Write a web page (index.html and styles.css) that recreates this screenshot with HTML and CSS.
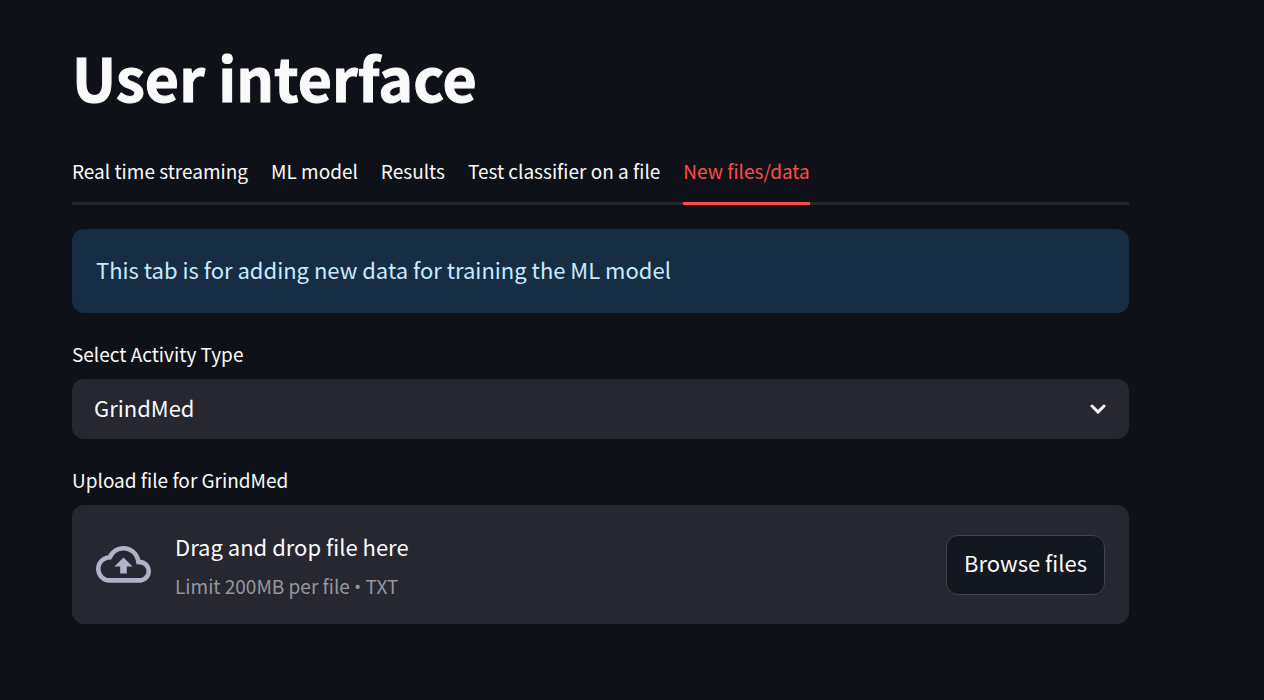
FILE: index.html
```html
<!DOCTYPE html>
<html lang="en">
<head>
<meta charset="utf-8">
<meta name="viewport" content="width=device-width, initial-scale=1">
<title>User interface</title>
<link rel="stylesheet" href="styles.css">
</head>
<body>
<main class="page">
  <h1 class="title">User interface</h1>
  <div class="tabs" role="tablist">
    <button class="tab" type="button" role="tab" aria-selected="false">Real time streaming</button>
    <button class="tab" type="button" role="tab" aria-selected="false">ML model</button>
    <button class="tab" type="button" role="tab" aria-selected="false">Results</button>
    <button class="tab" type="button" role="tab" aria-selected="false">Test classifier on a file</button>
    <button class="tab tab-active" type="button" role="tab" aria-selected="true">New files/data</button>
  </div>
  <p class="notice">This tab is for adding new data for training the ML model</p>
  <div class="field">
    <label class="label" for="activity">Select Activity Type</label>
    <div class="select-wrap">
      <select class="select" id="activity">
        <option>GrindMed</option>
      </select>
      <svg class="chevron" viewBox="0 0 16 10" aria-hidden="true"><path d="M2 2l6 6 6-6"/></svg>
    </div>
  </div>
  <div class="field">
    <label class="label" for="browse">Upload file for GrindMed</label>
    <div class="dropzone">
      <svg class="cloud" viewBox="0 0 24 16" aria-hidden="true"><path transform="translate(0 -4)" d="M19.35 10.04A7.49 7.49 0 0 0 12 4C9.11 4 6.6 5.64 5.35 8.04A5.994 5.994 0 0 0 0 14c0 3.31 2.69 6 6 6h13c2.76 0 5-2.24 5-5 0-2.64-2.05-4.78-4.65-4.96zM19 18H6c-2.21 0-4-1.79-4-4 0-2.05 1.53-3.76 3.56-3.97l1.07-.11.5-.95A5.469 5.469 0 0 1 12 6c2.62 0 4.88 1.86 5.39 4.43l.3 1.5 1.53.11A2.98 2.98 0 0 1 22 15c0 1.65-1.35 3-3 3zM8 13h2.55v3h2.9v-3H16l-4-4z"/></svg>
      <div class="drop-text">
        <span class="drop-main">Drag and drop file here</span>
        <span class="drop-hint">Limit 200MB per file <span class="bullet">•</span> TXT</span>
      </div>
      <button class="browse" id="browse" type="button">Browse files</button>
    </div>
  </div>
</main>
</body>
</html>
```
FILE: styles.css
```css
* {
  box-sizing: border-box;
}

body {
  margin: 0;
  background: #0e1117;
  color: #fafafa;
  font-family: "Noto Sans CJK SC", "Open Sans", sans-serif;
  font-size: 22px;
  line-height: 36px;
}

button,
select {
  font: inherit;
  color: inherit;
}

.page {
  padding: 37px 135px 40px 72px;
}

.title {
  margin: 0;
  font-size: 59px;
  font-weight: 700;
  line-height: 80px;
  -webkit-text-stroke: 1px #fafafa;
}

.tabs {
  display: flex;
  gap: 23px;
  margin: 28px 0 24px;
  box-shadow: inset 0 -3px #27282c;
}

.tab {
  padding: 8px 0 13px;
  border: 0;
  border-bottom: 3px solid transparent;
  background: none;
  font-size: 19px;
  white-space: nowrap;
}

.tab-active {
  border-color: #ff4b4b;
  color: #ff4b4b;
}

.notice {
  margin: 0;
  padding: 22px 24px 26px;
  border-radius: 12px;
  background: #172d43;
  color: #c7ebff;
}

.field {
  margin-top: 24px;
}

.label {
  display: block;
  padding-bottom: 8px;
  font-size: 19px;
  line-height: 34px;
}

.select-wrap {
  display: grid;
  align-items: center;
}

.select {
  grid-area: 1 / 1;
  width: 100%;
  height: 60px;
  padding: 0 60px 4px 22px;
  border: 0;
  border-radius: 12px;
  background: #262730;
  appearance: none;
}

.chevron {
  grid-area: 1 / 1;
  justify-self: end;
  width: 16px;
  margin-right: 23px;
  fill: none;
  stroke: #fafafa;
  stroke-width: 3;
  stroke-linecap: round;
  pointer-events: none;
}

.dropzone {
  display: flex;
  align-items: center;
  gap: 24px;
  padding: 24px;
  border-radius: 12px;
  background: #262730;
}

.cloud {
  flex: none;
  width: 55px;
  fill: #afb3c8;
}

.drop-text {
  display: flex;
  flex: 1;
  flex-direction: column;
  gap: 8px;
}

.drop-main {
  line-height: 34px;
}

.drop-hint {
  color: #96979b;
  font-size: 19px;
  line-height: 29px;
}

.bullet {
  font-family: "Open Sans", sans-serif;
  line-height: 1;
}

.browse {
  height: 60px;
  padding: 0 17px 5px;
  border: 1px solid #41444c;
  border-radius: 12px;
  background: #131720;
}
```
